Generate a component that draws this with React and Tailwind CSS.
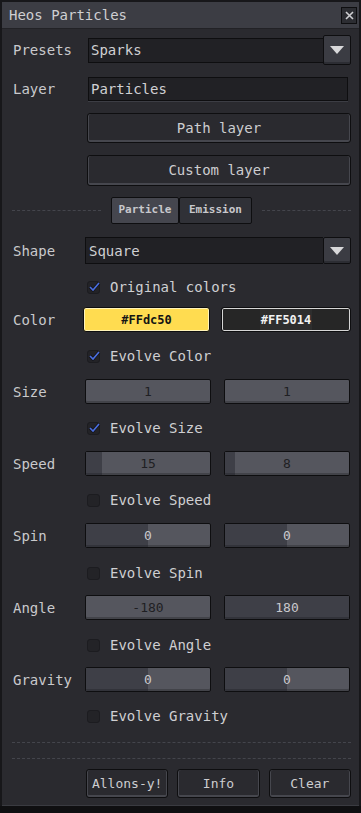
import React from "react";

const FONT = "font-['DejaVu_Sans_Mono',monospace]";

const Check = ({ checked, label }) => (
  <div className="flex items-center pl-[74px] h-[14px]">
    <div className="relative w-[13px] h-[13px] rounded-[3px] bg-[#232327] border border-[#1c1c20]">
      {checked && (
        <svg className="absolute -left-[1px] -top-[3px]" width="15" height="15" viewBox="0 0 15 15">
          <path d="M3 8 L6 11 L12 4" fill="none" stroke="#141418" strokeWidth="3.2" />
          <path d="M3 8 L6 11 L12 4" fill="none" stroke="#4a6ee0" strokeWidth="1.6" />
        </svg>
      )}
    </div>
    <span className="ml-[10px] text-[14px] text-[#cfcfd2] leading-none">{label}</span>
  </div>
);

const Label = ({ children }) => (
  <div className="w-[72px] shrink-0 text-[14px] text-[#c9c9cc] leading-none">{children}</div>
);

const Slider = ({ value, fill }) => {
  const dark = fill >= 50;
  return (
    <div className="relative flex-1 h-[25px] rounded-[2px] border border-[#0e0e10] bg-[#55565e] overflow-hidden shadow-[inset_0_-2px_0_rgba(0,0,0,0.22)]">
      <div className="absolute left-0 top-0 bottom-0 bg-[#3e3f47] shadow-[inset_0_-2px_0_rgba(0,0,0,0.18)]" style={{ width: fill + "%" }} />
      <div className={"relative flex items-center justify-center h-full text-[13px] leading-none " + (dark ? "text-[#c8c8cd]" : "text-[#1f1f23]")}>
        {value}
      </div>
    </div>
  );
};

const Button = ({ children, className = "" }) => (
  <div className={"flex items-center justify-center rounded-[3px] border border-[#0e0e10] bg-[#2a2a2f] text-[14px] text-[#cdcdd0] shadow-[inset_1px_0_0_#46474e,inset_-1px_0_0_#46474e,inset_0_-2px_0_#46474e] " + className}>
    {children}
  </div>
);

const DropBtn = ({ h }) => (
  <div className={"w-[28px] shrink-0 flex items-center justify-center rounded-[2px] border border-[#0e0e10] bg-[#3b3c43] shadow-[inset_0_-2px_0_#2c2d33] " + h}>
    <svg width="14" height="8" viewBox="0 0 14 8">
      <path d="M0 0 H14 L7 8 Z" fill="#d8d8da" />
    </svg>
  </div>
);

const Dashed = ({ className = "" }) => (
  <div className={"h-0 border-t border-dashed border-[#44454c] " + className} />
);

export default function App() {
  return (
    <div className={"w-[361px] h-[813px] bg-[#0f0f11] " + FONT}>
      <div className="h-[806px] border-x-2 border-t-2 border-[#17171a] bg-[#2a2a2f] flex flex-col">
        <div className="h-[27px] shrink-0 bg-[#3c3d44] border-b border-[#222226] flex items-center justify-between pl-[7px] pr-[2px]">
          <span className="text-[14px] text-[#cfcfd2] leading-none">Heos Particles</span>
          <div className="w-[16px] h-[17px] border border-[#0e0e10] bg-[#2c2d32] flex items-center justify-center">
            <svg width="9" height="9" viewBox="0 0 9 9">
              <path d="M1 1 L8 8 M8 1 L1 8" stroke="#cfcfd2" strokeWidth="1.6" />
            </svg>
          </div>
        </div>

        <div className="flex-1 flex flex-col pl-[11px] pr-[8px]">
          <div className="mt-[6px] flex items-center h-[30px]">
            <Label>Presets</Label>
            <div className="ml-[3px] flex-1 h-[25px] bg-[#212125] border border-[#0e0e10] border-r-0 flex items-center pl-[2px] text-[14px] text-[#d0d0d3] leading-none">Sparks</div>
            <DropBtn h="h-[30px]" />
          </div>

          <div className="mt-[12px] flex items-center h-[24px]">
            <Label>Layer</Label>
            <div className="ml-[3px] mr-[3px] flex-1 h-[24px] bg-[#212125] border border-[#0e0e10] shadow-[0_1px_0_#3c3d44] flex items-center pl-[2px] text-[14px] text-[#d0d0d3] leading-none">Particles</div>
          </div>

          <Button className="mt-[12px] ml-[74px] h-[30px]">Path layer</Button>
          <Button className="mt-[12px] ml-[74px] h-[31px]">Custom layer</Button>

          <div className="mt-[11px] -ml-[1px] flex items-center h-[27px]">
            <Dashed className="w-[89px]" />
            <div className="ml-[10px] flex">
              <div className="w-[68px] h-[27px] flex items-center justify-center border border-[#0e0e10] rounded-[2px] bg-[#45464e] text-[11px] font-bold text-[#c8c8cc]">Particle</div>
              <div className="w-[73px] h-[27px] flex items-center justify-center border border-[#0e0e10] rounded-[2px] bg-[#303137] text-[11px] font-bold text-[#c8c8cc]">Emission</div>
            </div>
            <Dashed className="ml-[10px] flex-1" />
          </div>

          <div className="mt-[13px] flex items-center h-[27px]">
            <Label>Shape</Label>
            <div className="flex-1 h-[27px] bg-[#212125] border border-[#0e0e10] border-r-0 flex items-center pl-[3px] text-[14px] text-[#d0d0d3] leading-none">Square</div>
            <DropBtn h="h-[27px]" />
          </div>

          <div className="mt-[16px]"><Check checked label="Original colors" /></div>

          <div className="mt-[13px] flex items-center h-[25px]">
            <Label>Color</Label>
            <div className="-ml-[2px] w-[127px] h-[25px] rounded-[3px] border border-[#0e0e10] bg-[#ffdc50] shadow-[inset_0_0_0_1px_#fff3b8] flex items-center justify-center text-[12px] font-bold text-[#141414]">#FFdc50</div>
            <div className="ml-[11px] flex-1 h-[25px] rounded-[3px] border border-[#0e0e10] shadow-[inset_0_0_0_1px_#d6d6d6] bg-[linear-gradient(90deg,#262626_0%,#262626_30%,#2e2e2e_30%,#2e2e2e_70%,#262626_70%)] flex items-center justify-center text-[12px] font-bold text-[#f2f2f2]">#FF5014</div>
          </div>

          <div className="mt-[17px]"><Check checked label="Evolve Color" /></div>

          <div className="mt-[16px] flex items-center h-[25px]">
            <Label>Size</Label>
            <div className="flex-1 flex gap-[13px] mr-[1px]">
              <Slider value="1" fill={0} />
              <Slider value="1" fill={0} />
            </div>
          </div>

          <div className="mt-[17px]"><Check checked label="Evolve Size" /></div>

          <div className="mt-[16px] flex items-center h-[25px]">
            <Label>Speed</Label>
            <div className="flex-1 flex gap-[13px] mr-[1px]">
              <Slider value="15" fill={13} />
              <Slider value="8" fill={8} />
            </div>
          </div>

          <div className="mt-[17px]"><Check label="Evolve Speed" /></div>

          <div className="mt-[16px] flex items-center h-[25px]">
            <Label>Spin</Label>
            <div className="flex-1 flex gap-[13px] mr-[1px]">
              <Slider value="0" fill={50} />
              <Slider value="0" fill={50} />
            </div>
          </div>

          <div className="mt-[18px]"><Check label="Evolve Spin" /></div>

          <div className="mt-[15px] flex items-center h-[25px]">
            <Label>Angle</Label>
            <div className="flex-1 flex gap-[13px] mr-[1px]">
              <Slider value="-180" fill={0} />
              <Slider value="180" fill={100} />
            </div>
          </div>

          <div className="mt-[18px]"><Check label="Evolve Angle" /></div>

          <div className="mt-[15px] flex items-center h-[25px]">
            <Label>Gravity</Label>
            <div className="flex-1 flex gap-[13px] mr-[1px]">
              <Slider value="0" fill={50} />
              <Slider value="0" fill={50} />
            </div>
          </div>

          <div className="mt-[17px]"><Check label="Evolve Gravity" /></div>

          <Dashed className="mt-[19px] -ml-[1px]" />
          <Dashed className="mt-[15px] -ml-[1px]" />

          <div className="mt-[10px] ml-[73px] flex gap-[9px] h-[29px]">
            <Button className="flex-1 !text-[13px]">Allons-y!</Button>
            <Button className="flex-1 !text-[13px]">Info</Button>
            <Button className="flex-1 !text-[13px]">Clear</Button>
          </div>
        </div>
        <div className="h-[1px] bg-[#3a3b41]" />
      </div>
    </div>
  );
}
